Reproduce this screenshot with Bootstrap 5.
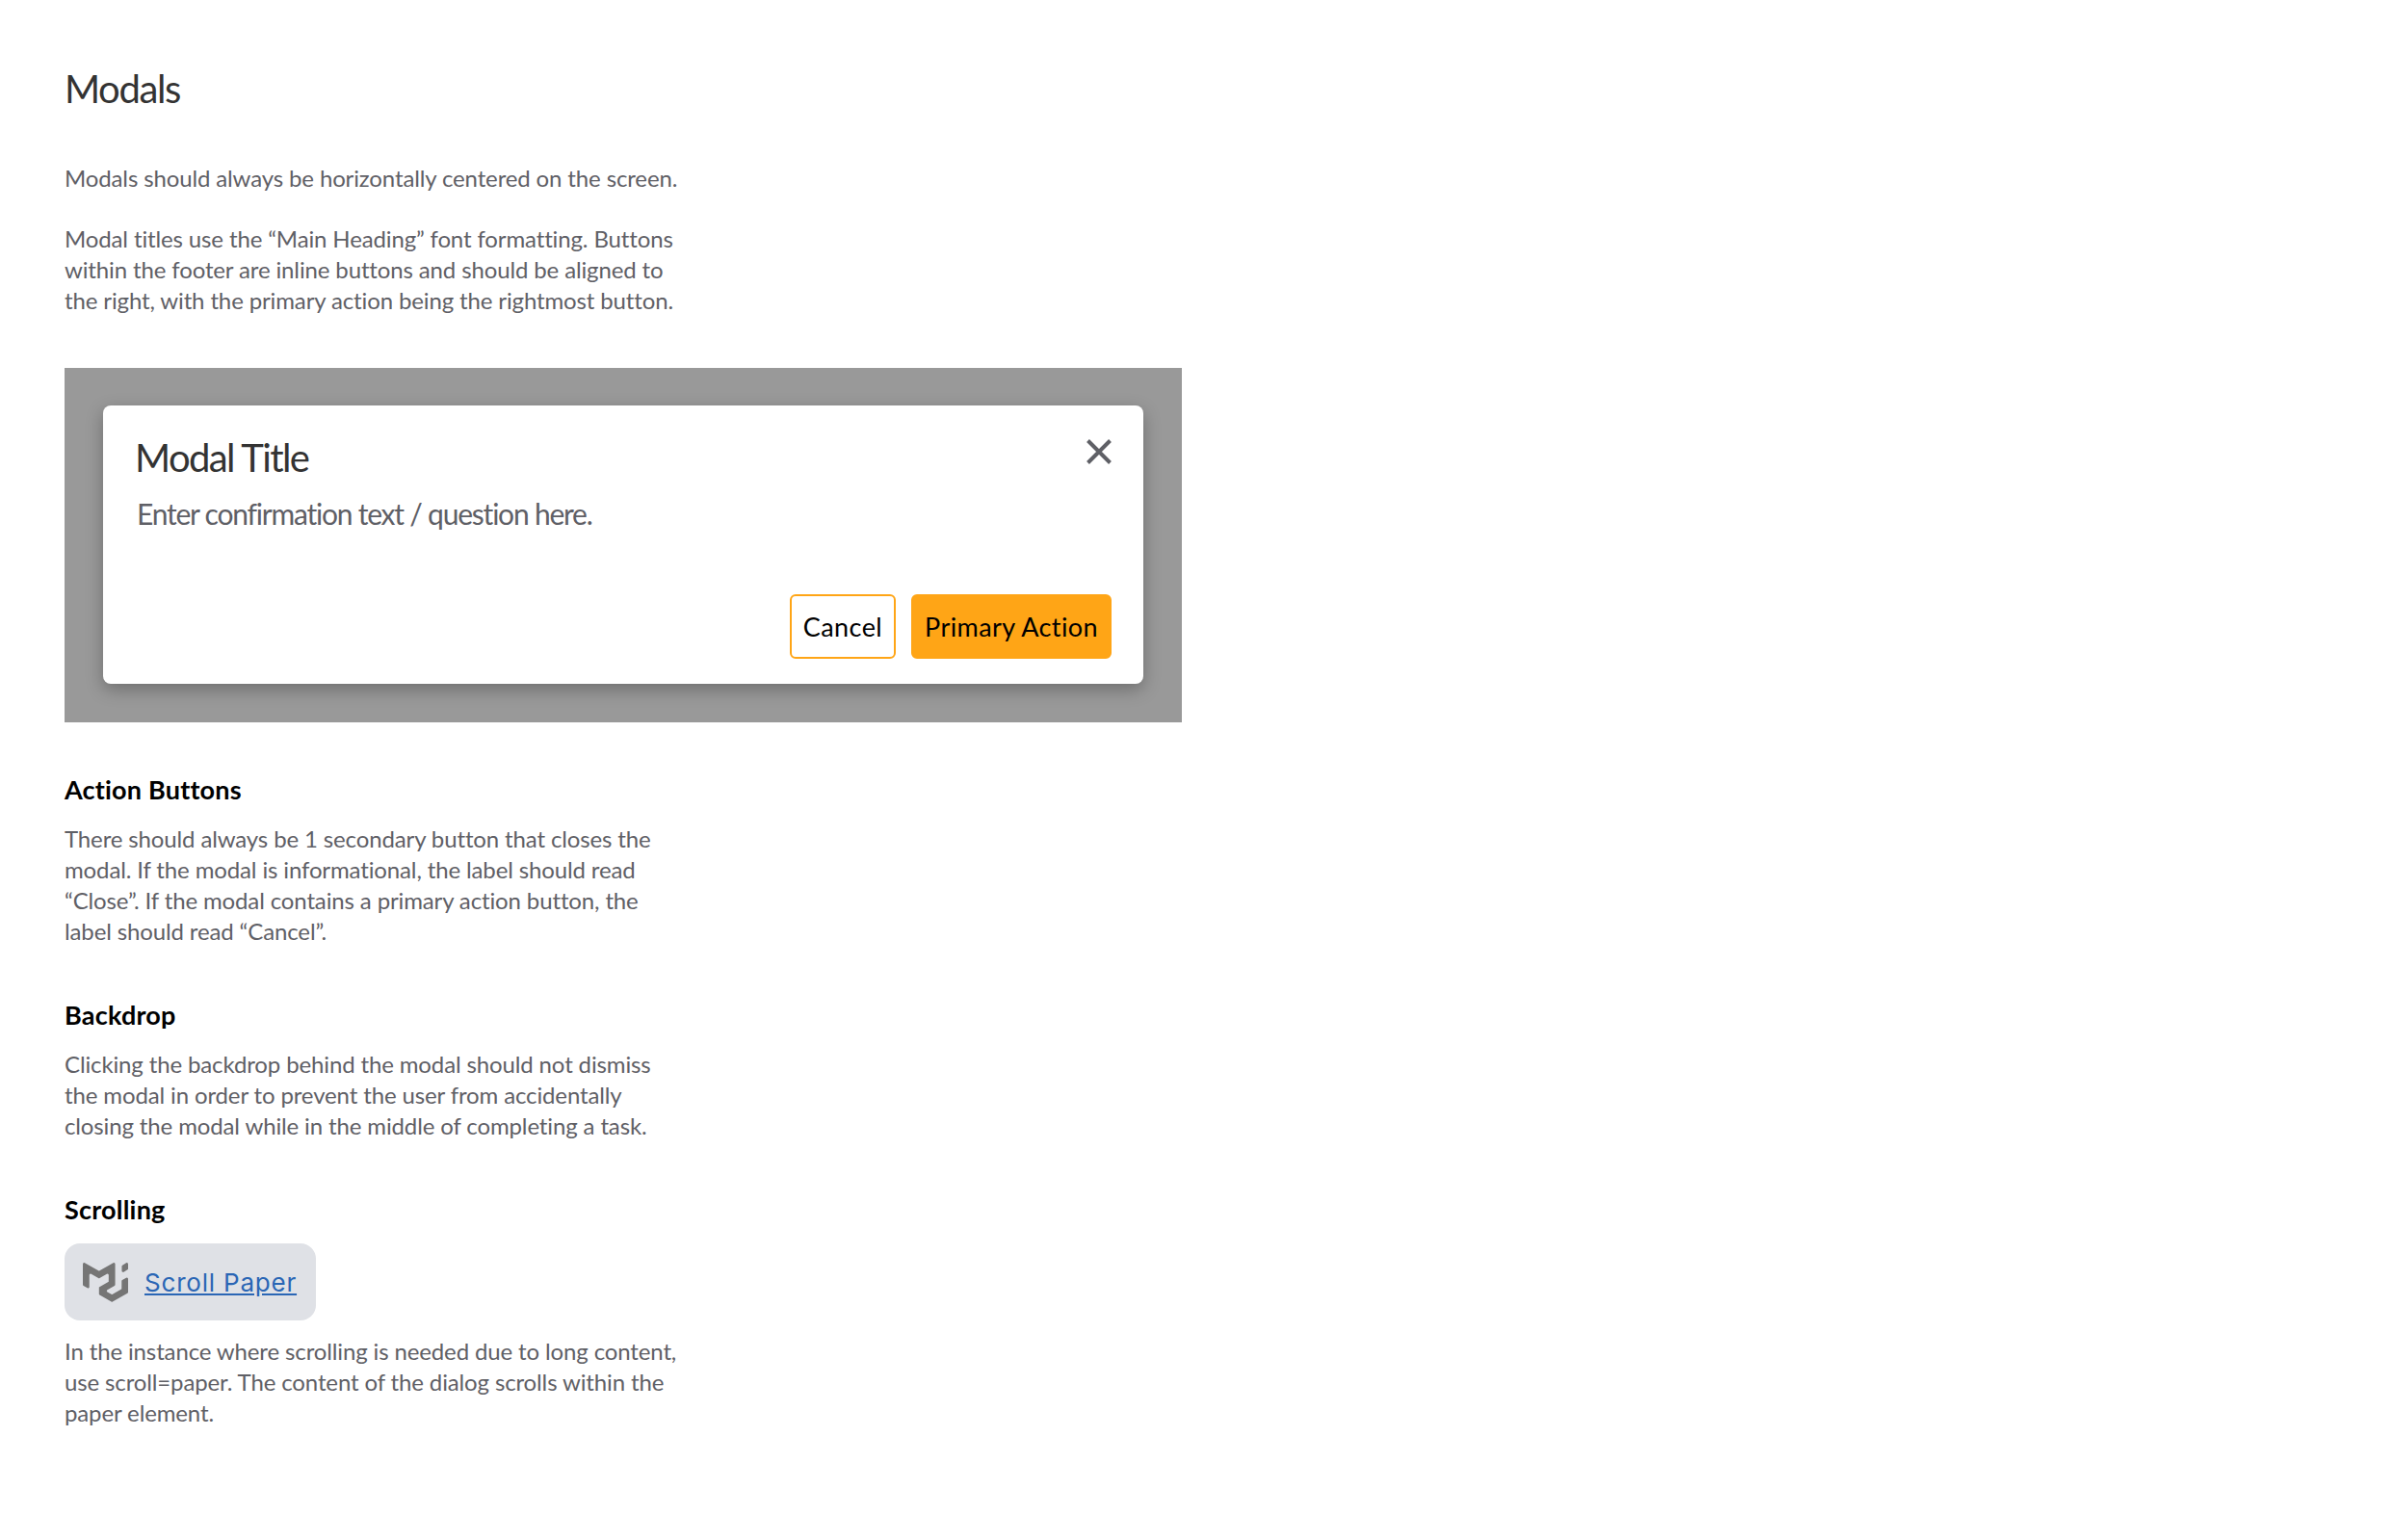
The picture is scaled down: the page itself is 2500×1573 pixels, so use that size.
<!DOCTYPE html>
<html lang="en">
<head>
<meta charset="utf-8">
<title>Modals</title>
<link href="https://cdn.jsdelivr.net/npm/bootstrap@5.3.0/dist/css/bootstrap.min.css" rel="stylesheet">
<style>
body{background:#fff;font-family:"Lato","Noto Sans",sans-serif;color:#5f6066;}
.sheet{padding:66px 0 0 67px;}
.page-title{font-size:40px;line-height:52px;font-weight:400;color:#333;letter-spacing:-1.4px;margin:0 0 51px;}
.copy{width:640px;font-size:24px;line-height:32px;letter-spacing:-.13px;margin:0 0 31px;}
.copy-last{margin-bottom:0;}
.stage{width:1160px;height:368px;background:#999;padding:39px 40px 40px;margin:54px 0 52px;}
.dialog{height:100%;background:#fff;border-radius:8px;box-shadow:0 6px 18px rgba(0,0,0,.28);padding:29px 33px 26px 33px;}
.dialog-title{font-size:40px;line-height:50px;font-weight:400;color:#333;letter-spacing:-1.6px;margin:0;}
.dialog-body{font-size:30px;line-height:40px;font-weight:400;color:#5f6066;letter-spacing:-1.22px;margin:13px 0 0 2px;}
.close-x{width:40px;height:40px;margin:-1px -7px 0 0;padding:0;background:none;border:0;}
.act{height:67px;font-size:27px;line-height:1;letter-spacing:.4px;color:#000;border-radius:6px;padding:0 12px;}
.act-ghost{background:#fff;border:2px solid #ffa516;}
.act-main{background:#ffa516;border:2px solid #ffa516;}
.sub{font-size:27px;line-height:36px;font-weight:700;letter-spacing:.2px;color:#000;margin:0 0 17px;}
.chip{width:261px;height:80px;background:#dfe1e6;border-radius:16px;padding:0 19px;margin-bottom:16px;gap:17px;}
.chip a{font-family:"Inter",sans-serif;font-size:26px;letter-spacing:.8px;color:#2a66b5;}
.block{margin-bottom:53px;}
</style>
</head>
<body>
<main class="sheet">
  <h1 class="page-title">Modals</h1>
  <p class="copy">Modals should always be horizontally centered on the screen.</p>
  <p class="copy copy-last">Modal titles use the “Main Heading” font formatting. Buttons within the footer are inline buttons and should be aligned to the right, with the primary action being the rightmost button.</p>
  <div class="stage">
    <div class="dialog d-flex flex-column">
      <div class="d-flex justify-content-between align-items-start">
        <h2 class="dialog-title">Modal Title</h2>
        <button class="close-x d-flex align-items-center justify-content-center" type="button" aria-label="Close">
          <svg width="26" height="26" viewBox="0 0 26 26"><path d="M1.5 1.5L24.5 24.5M24.5 1.5L1.5 24.5" stroke="#5f6066" stroke-width="4" fill="none"/></svg>
        </button>
      </div>
      <p class="dialog-body">Enter confirmation text / question here.</p>
      <div class="d-flex justify-content-end gap-3 mt-auto">
        <button class="btn act act-ghost" type="button">Cancel</button>
        <button class="btn act act-main" type="button">Primary Action</button>
      </div>
    </div>
  </div>
  <section class="block">
    <h3 class="sub">Action Buttons</h3>
    <p class="copy copy-last">There should always be 1 secondary button that closes the modal. If the modal is informational, the label should read “Close”. If the modal contains a primary action button, the label should read “Cancel”.</p>
  </section>
  <section class="block">
    <h3 class="sub">Backdrop</h3>
    <p class="copy copy-last">Clicking the backdrop behind the modal should not dismiss the modal in order to prevent the user from accidentally closing the modal while in the middle of completing a task.</p>
  </section>
  <section>
    <h3 class="sub">Scrolling</h3>
    <div class="chip d-flex align-items-center">
      <svg width="47" height="42" viewBox="0 0 36 32" fill="#757575"><path d="M30.343 21.976a1 1 0 00.502-.864l.018-5.787a1 1 0 01.502-.864l3.137-1.802a1 1 0 011.498.867v10.521a1 1 0 01-.502.867l-11.839 6.8a1 1 0 01-.994.001l-9.291-5.314a1 1 0 01-.504-.868v-5.305c0-.006.007-.01.013-.007.005.003.012 0 .012-.007v-.006c0-.004.002-.008.006-.01l7.652-4.396c.007-.004.004-.015-.004-.015a.008.008 0 01-.008-.008l.015-5.201a1 1 0 00-1.5-.87l-5.687 3.277a1 1 0 01-.998 0L6.666 9.7a1 1 0 00-1.499.866v9.4a1 1 0 01-1.496.869l-3.166-1.81a1 1 0 01-.504-.87l.028-16.43A1 1 0 011.527.86l10.845 6.229a1 1 0 00.996 0L24.21.86a1 1 0 011.498.868v16.434a1 1 0 01-.501.867l-5.678 3.27a1 1 0 00.004 1.735l3.132 1.783a1 1 0 00.993-.002l6.685-3.839zM31 7.234a1 1 0 001.514.857l3-1.8A1 1 0 0036 5.434V1.766A1 1 0 0034.486.91l-3 1.8a1 1 0 00-.486.857v3.668z"/></svg>
      <a href="#">Scroll Paper</a>
    </div>
    <p class="copy copy-last">In the instance where scrolling is needed due to long content, use scroll=paper. The content of the dialog scrolls within the paper element.</p>
  </section>
</main>
</body>
</html>
